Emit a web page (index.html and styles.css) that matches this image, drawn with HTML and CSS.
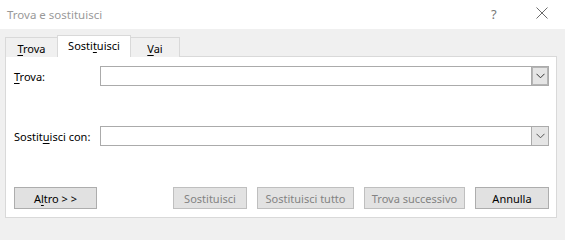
FILE: index.html
```html
<!DOCTYPE html>
<html lang="it">
<head>
<meta charset="utf-8">
<title>Trova e sostituisci</title>
<link rel="stylesheet" href="styles.css">
</head>
<body>
<div class="dialog">
  <div class="titlebar">
    <span class="title">Trova e sostituisci</span>
    <span class="help">?</span>
    <span class="close">
      <svg width="12" height="12" viewBox="0 0 12 12"><path d="M0.5 0.5 L11.5 11.5 M11.5 0.5 L0.5 11.5" stroke="#6b6b6b" stroke-width="1" fill="none"/></svg>
    </span>
  </div>
  <div class="body">
    <div class="tabs">
      <div class="tab tab-trova"><u>T</u>rova</div>
      <div class="tab tab-sost active">Sosti<u>t</u>uisci</div>
      <div class="tab tab-vai"><u>V</u>ai</div>
    </div>
    <div class="panel">
      <div class="row">
        <label class="label"><u>T</u>rova:</label>
        <div class="combo">
          <div class="field"></div>
          <div class="drop strong">
            <svg width="9" height="6" viewBox="0 0 9 6"><path d="M0.5 0.8 L4.5 4.8 L8.5 0.8" stroke="#333" stroke-width="1" fill="none"/></svg>
          </div>
        </div>
      </div>
      <div class="row row2">
        <label class="label">Sostit<u>u</u>isci con:</label>
        <div class="combo">
          <div class="field"></div>
          <div class="drop">
            <svg width="9" height="6" viewBox="0 0 9 6"><path d="M0.5 0.8 L4.5 4.8 L8.5 0.8" stroke="#555" stroke-width="1" fill="none"/></svg>
          </div>
        </div>
      </div>
      <div class="buttons">
        <button class="btn btn-altro">A<u>l</u>tro &gt; &gt;</button>
        <div class="right">
          <button class="btn disabled w74">Sostituisci</button>
          <button class="btn disabled w97">Sostituisci tutto</button>
          <button class="btn disabled w101">Trova successivo</button>
          <button class="btn w74">Annulla</button>
        </div>
      </div>
    </div>
  </div>
</div>
</body>
</html>
```
FILE: styles.css
```css
* { box-sizing: border-box; }
html, body { margin: 0; padding: 0; }
body {
  width: 565px;
  height: 226px;
  background: #f0f0f0;
  font-family: "Noto Sans", "DejaVu Sans", sans-serif;
  font-size: 11px;
  color: #000;
  overflow: hidden;
}
.dialog { width: 565px; height: 226px; }
.titlebar {
  height: 29px;
  background: #fff;
  display: flex;
  align-items: center;
  padding-left: 7px;
}
.title {
  flex: 1;
  color: #999;
  font-size: 11.5px;
  margin-top: -1px;
}
.help {
  color: #777;
  font-size: 13px;
  width: 12px;
  margin-right: 33px;
  margin-top: -2px;
}
.close {
  width: 12px;
  height: 12px;
  margin-right: 17px;
  margin-top: -3px;
  display: flex;
}
.body { padding: 7px 8px 0 5px; }
.tabs {
  display: flex;
  align-items: flex-end;
  height: 21px;
  position: relative;
  z-index: 1;
  margin-bottom: -1px;
}
.tab {
  height: 20px;
  border: 1px solid #d9d9d9;
  border-bottom: none;
  background: #f0f0f0;
  text-align: center;
  line-height: 19px;
  padding-top: 1px;
}
.tab-trova { width: 52px; border-right: none; }
.tab-sost { width: 74px; }
.tab-vai { width: 49px; border-left: none; }
.tab.active {
  height: 22px;
  background: #fff;
  padding-top: 0;
  line-height: 20px;
}
.panel {
  height: 162px;
  background: #fff;
  border: 1px solid #d9d9d9;
  padding: 9px 7px 8px 8px;
  display: flex;
  flex-direction: column;
}
.row {
  display: flex;
  align-items: center;
  height: 20px;
}
.row2 { margin-top: 40px; }
.label { width: 86px; }
.combo {
  flex: 1;
  height: 20px;
  display: flex;
  border: 1px solid #ababab;
  background: #fff;
}
.field { flex: 1; }
.drop {
  width: 17px;
  height: 18px;
  background: #e5e5e5;
  border-left: 1px solid #ababab;
  display: flex;
  align-items: center;
  justify-content: center;
}
.drop.strong {
  box-shadow: inset 0 0 0 1px #b5b5b5;
}
.buttons {
  margin-top: auto;
  display: flex;
  justify-content: space-between;
  height: 22px;
}
.right { display: flex; gap: 10px; }
.btn {
  height: 22px;
  font: inherit;
  background: #e1e1e1;
  border: 1px solid #adadad;
  color: #000;
  padding: 0;
  margin: 0;
  text-align: center;
}
.btn.disabled { color: #838383; border-color: #bfbfbf; background: #e2e2e2; }
.btn-altro { width: 83px; }
.w74 { width: 74px; }
.w97 { width: 97px; }
.w101 { width: 101px; }
u { text-underline-offset: 2px; }
```
